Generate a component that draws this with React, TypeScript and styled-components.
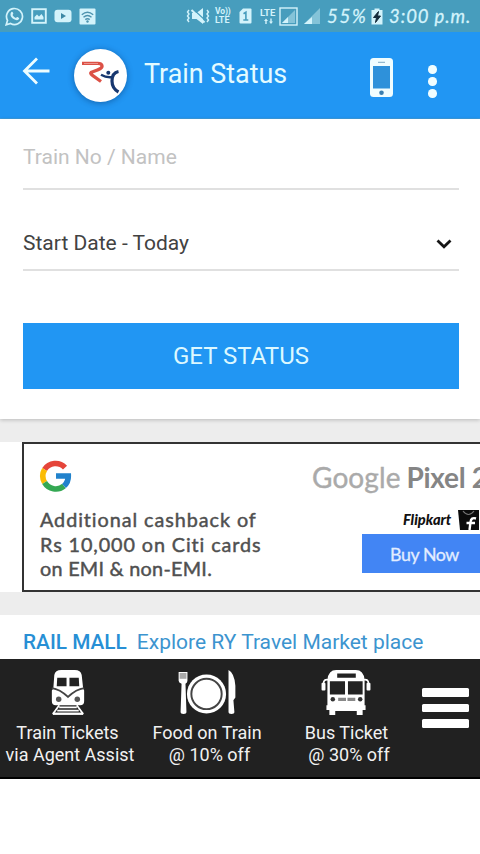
import React from 'react';
import styled, { createGlobalStyle } from 'styled-components';

const GlobalStyle = createGlobalStyle`
  * { box-sizing: border-box; }
  body { margin: 0; background: #fff; font-family: Roboto, sans-serif; }
`;

const Screen = styled.div`
  width: 480px;
  height: 854px;
  display: flex;
  flex-direction: column;
  overflow: hidden;
  background: #fff;
`;

const Label = styled.span<{ $size: number; $color: string; $spacing?: number; $weight?: number; $line?: number }>`
  display: block;
  white-space: pre;
  font-size: ${p => p.$size}px;
  line-height: ${p => p.$line ?? 24}px;
  color: ${p => p.$color};
  letter-spacing: ${p => p.$spacing ?? 0}px;
  font-weight: ${p => p.$weight ?? 400};
`;

const StatusBar = styled.header`
  height: 32px;
  flex: none;
  display: flex;
  align-items: center;
  padding-left: 5px;
  background: #479dbd;
  color: #d3f3fb;
`;

const Slot = styled.div<{ $width: number; $gap?: number }>`
  width: ${p => p.$width}px;
  margin-left: ${p => p.$gap ?? 0}px;
  flex: none;
  display: flex;
  flex-direction: column;
  svg { display: block; }
`;

const Clock = styled(Label)`
  font-family: Lato, sans-serif;
  font-style: italic;
  -webkit-text-stroke: 0.3px currentColor;
`;

const AppBar = styled.div`
  height: 87px;
  flex: none;
  display: flex;
  align-items: flex-start;
  padding-left: 22px;
  background: #2196f3;
  border-bottom: 1px solid #3c9ce0;
  svg { display: block; flex: none; }
`;

const BackIcon = styled.svg`margin-top: 25px;`;
const Logo = styled.div`
  width: 53px;
  height: 53px;
  margin: 17px 0 0 24px;
  border-radius: 50%;
  background: #fff;
  box-shadow: 0 1px 6px rgba(0, 40, 90, 0.45);
`;
const Title = styled(Label)`
  width: 225px;
  margin: 26px 0 0 17px;
`;
const PhoneIcon = styled.svg`margin-top: 26px;`;
const Dots = styled.div`
  display: flex;
  flex-direction: column;
  gap: 3.500px;
  margin: 33px 0 0 34px;
`;
const Dot = styled.i`
  width: 8.500px;
  height: 8.500px;
  border-radius: 50%;
  background: #f0fdff;
`;

const FormCard = styled.section`
  height: 300px;
  flex: none;
  padding: 0 21px 0 23px;
  background: #fff;
  box-shadow: 0 1px 4px rgba(0, 0, 0, 0.22);
  z-index: 1;
`;
const Field = styled.div<{ $height: number; $bottom: number }>`
  height: ${p => p.$height}px;
  display: flex;
  align-items: flex-end;
  justify-content: space-between;
  padding: 0 7px ${p => p.$bottom}px 0;
  border-bottom: 2px solid #e0e0e0;
`;
const Submit = styled.button`
  display: flex;
  width: 436px;
  height: 66px;
  margin-top: 52px;
  padding: 0;
  align-items: center;
  justify-content: center;
  border: 0;
  background: #2196f3;
  font-family: inherit;
`;

const Band = styled.div`
  height: 23px;
  flex: none;
  background: #ededed;
`;

const AdRow = styled.section`
  height: 150px;
  flex: none;
  padding-left: 22px;
  overflow: hidden;
`;
const Ad = styled.div`
  width: 520px;
  height: 150px;
  display: flex;
  border: 2px solid #333;
  font-family: Lato, sans-serif;
`;
const AdCopy = styled.div`
  width: 288px;
  padding: 15px 0 0 15px;
  svg { display: block; margin-bottom: 14px; }
`;
const AdLine = styled(Label)`
  margin-left: 1px;
  -webkit-text-stroke: 0.45px currentColor;
`;
const AdOffer = styled.div`
  flex: 1;
  padding-top: 17px;
`;
const Product = styled.div`display: flex; gap: 6px;`;
const ProductBrand = styled(Label)`
  -webkit-text-stroke: 0.4px currentColor;
`;
const Seller = styled.div`
  display: flex;
  align-items: center;
  height: 22px;
  margin: 16px 0 0 91px;
`;
const SellerName = styled(Label)`
  width: 55px;
  font-style: italic;
`;
const BuyButton = styled.div`
  height: 39px;
  margin: 3px 0 0 50px;
  padding: 8px 0 0 28px;
  background: #4285f4;
`;
const BuyText = styled(Label)`
  -webkit-text-stroke: 0.3px currentColor;
`;

const Mall = styled.section`
  height: 44px;
  flex: none;
  display: flex;
  gap: 10px;
  padding: 15px 0 0 23px;
`;

const BottomBar = styled.nav`
  height: 120px;
  flex: none;
  display: flex;
  background: #212121;
  border-bottom: 2px solid #000;
`;
const Tab = styled.div`
  width: 139px;
  flex: none;
  display: flex;
  flex-direction: column;
  align-items: center;
  padding-top: 11px;
  svg { display: block; height: 45px; margin: 0 4px 6px 0; }
`;
const TabLine = styled(Label)<{ $shift?: number }>`
  margin-left: ${p => p.$shift ?? 0}px;
`;
const Burger = styled.div`
  display: flex;
  flex-direction: column;
  gap: 7px;
  margin: 29px 0 0 5px;
`;
const Bar = styled.i`
  width: 47px;
  height: 8.6px;
  border-radius: 1.5px;
  background: #fff;
`;

const WhatsApp = () => (
  <svg width="19" height="19" viewBox="0 0 19 19" fill="none">
    <path d="M1.2 17.8 2.5 13.4A8 8 0 1 1 5.6 16.5Z" stroke="currentColor" strokeWidth="1.7" />
    <path d="M6.2 5.2c.7-.8 1.3-.6 1.7.3.7 1.4.3 1.5-.3 2.4.7 1.5 1.8 2.4 3.4 3 .9-1.1 1-1.2 2.3-.5 1.3.6 1 1 .5 1.8-1.2 1.5-3.4 1-5.2-.2C6.3 10.7 4.4 8 6.2 5.2Z" fill="currentColor" />
  </svg>
);
const Picture = () => (
  <svg width="16" height="16" viewBox="0 0 16 16" fill="none">
    <rect x="1.2" y="1.2" width="13.6" height="13.6" stroke="currentColor" strokeWidth="1.9" />
    <path d="M3.5 11.5V9l2.500-2.500 2 2L10.500 6l2 3v2.500Z" fill="currentColor" />
  </svg>
);
const Video = () => (
  <svg width="18" height="14" viewBox="0 0 18 14">
    <rect x=".5" y=".8" width="17" height="12.4" rx="3" fill="currentColor" />
    <path d="m7 4 5 3-5 3Z" fill="#3c88a5" />
  </svg>
);
const WifiBox = () => (
  <svg width="17" height="17" viewBox="0 0 17 17" fill="none">
    <rect x=".5" y=".5" width="16" height="16" rx="1" fill="currentColor" />
    <path d="M2.800 6.700q5.700-4.800 11.400 0M4.500 9.300q4-3.400 8 0M6.300 11.600q2.200-1.800 4.400 0" stroke="#4d93ae" strokeWidth="1.4" />
    <circle cx="8.5" cy="13.5" r="1.2" fill="#4d93ae" />
  </svg>
);
const Mute = () => (
  <svg width="24" height="18" viewBox="0 0 24 18" fill="none" stroke="currentColor">
    <path d="M6 6h4.500L17 1v16l-6.500-5H6Z" fill="currentColor" stroke="none" />
    <path d="m7 2 13 12" stroke="#479dbd" strokeWidth="1.2" />
    <path d="m5.500 3 13 12.500" strokeWidth="2" />
    <path d="m3 3-1.500 2L3 7 1.500 9 3 11l-1.500 2L3 15M21 3l1.500 2L21 7l1.500 2-1.500 2 1.500 2-1.500 2" strokeWidth="1.4" />
  </svg>
);
const Sim = () => (
  <svg width="13" height="16" viewBox="0 0 13 16" fill="none">
    <path d="M4 .5h7.500q1 0 1 1v13q0 1-1 1h-10q-1 0-1-1V4Z" fill="currentColor" />
    <path d="m4.500 5.700 2.400-1.500V12M4.300 12h5" stroke="#479dbd" strokeWidth="1.6" />
  </svg>
);
const Arrows = () => (
  <svg width="16" height="7" viewBox="0 0 16 7" fill="currentColor">
    <path d="M6 .5 8 3H6.700v3H5.300V3H4ZM11 6 9 3.500h1.300v-3h1.400v3H13Z" />
  </svg>
);
const SignalBox = () => (
  <svg width="19" height="19" viewBox="0 0 19 19" fill="none">
    <rect x="1" y="1" width="17" height="17" stroke="currentColor" strokeWidth="1.4" />
    <path d="M3 16 16 3v13Z" fill="#84c3d8" />
    <path d="M3 16l6-6v6Z" fill="currentColor" />
  </svg>
);
const Signal = () => (
  <svg width="16" height="16" viewBox="0 0 16 16">
    <path d="M0 16 16 0v16Z" fill="#84c3d8" />
    <path d="m0 16 8-7v7Z" fill="currentColor" />
  </svg>
);
const Battery = () => (
  <svg width="12" height="17" viewBox="0 0 12 17">
    <path d="M3.500 2V.5h5V2h3v14.500H.5V2Z" fill="currentColor" />
    <path d="M7.500 3.500 2.500 9.500h3l-1 5 5-6.500h-3Z" fill="#142b3b" stroke="#142b3b" />
  </svg>
);

const LogoMark = () => (
  <svg width="53" height="53" viewBox="0 0 53 53" fill="none">
    <path d="M8 14.300h16c4.500 0 5 3.500 2.500 5.200-2.500 1.500-5 2.300-8.500 3.500-2 .8-1.500 2 .5 3.300l8.500 6.200" stroke="#dc5146" strokeWidth="3.3" />
    <path d="M10 14.500h14" stroke="#f0a59f" strokeWidth=".8" />
    <path d="M27 25.800c3.500 2 7.500 3 12 2.200" stroke="#17376f" strokeWidth="2.4" />
    <path d="M44.500 22.500c-5 1-6.500 5-6.500 9.500 0 5 2 8.500 6.500 11" stroke="#17376f" strokeWidth="3.200" />
    <circle cx="34.3" cy="23.8" r="2" fill="#17376f" />
  </svg>
);

const GoogleG = () => (
  <svg width="33" height="34" viewBox="0 0 33 34" fill="none" strokeWidth="5.600">
    <path d="M26 8.600A13 13 0 0 0 5.600 10.500" stroke="#e5453a" />
    <path d="M5.600 10.500A13 13 0 0 0 5.600 23.500" stroke="#fbbc05" />
    <path d="M5.600 23.500A13 13 0 0 0 25 27" stroke="#34a853" />
    <path d="M25 27A13 13 0 0 0 29.300 17H17" stroke="#2182cc" />
  </svg>
);

const SellerBag = () => (
  <svg width="21" height="22" viewBox="0 0 21 22" fill="none">
    <path d="M0 1h21v20H2Z" fill="#0b0b0b" />
    <path d="M5 2q5.500 7 11 0" stroke="#777" strokeWidth="1.2" />
    <path d="M18 9.500q-5-1.500-5.500 3.500l-1 8M8.500 14H17" stroke="#fff" strokeWidth="2.4" />
  </svg>
);

const Train = () => (
  <svg width="34" height="46" viewBox="0 0 34 46">
    <path d="M3 5Q4 0 10 0h14q6 0 7 5l1.500 14L33.500 21v11q0 4-4 4h-25q-4 0-4-4V21L2 19Z" fill="#fff" />
    <path d="M6 8h9.500v8.500H5.500ZM18.500 8H28l.5 8.500h-10Z" fill="#222" />
    <path d="M.5 18.500q8 1 16.500 9 8.500-8 16.500-9" fill="none" stroke="#444" strokeWidth="2" />
    <circle cx="7.500" cy="29.800" r="2.800" fill="#555" /><circle cx="26.500" cy="29.800" r="2.800" fill="#555" />
    <path d="M8 36 1.500 45M26 36l6.500 9M8 38.300h18M6 41.600h22" stroke="#fff" strokeWidth="1.800" />
    <path d="M1.500 44.700h31" stroke="#fff" strokeWidth="2.400" />
  </svg>
);
const Meal = () => (
  <svg width="58" height="46" viewBox="0 0 58 46" fill="#fff">
    <path d="M0 2h9v9q0 2-2 3l1 29q0 2-3 2t-3-2l1-29q-3-1-3-3Z" />
    <path d="M1 3h7v6H1Z" fill="#aaa" />
    <circle cx="28.5" cy="24.5" r="20" /><circle cx="28.5" cy="24.5" r="15.5" fill="none" stroke="#444" strokeWidth="2" />
    <path d="M51 0q6 3 7 16v12l-2 3 1 12q0 2-3 2t-3-2Z" />
  </svg>
);
const Bus = () => (
  <svg width="50" height="46" viewBox="0 0 50 46">
    <path d="M6 10q1-10 9-10h20q8 0 9 10v26h1v5h-3v5h-6v-4H14v4H8v-5H5v-5h1Z" fill="#fff" />
    <path d="M7 10Q2 9 2 14M43 10q5-1 5 4" fill="none" stroke="#fff" strokeWidth="1.7" />
    <rect x="0" y="13" width="4" height="8" rx="1" fill="#fff" /><rect x="46" y="13" width="4" height="8" rx="1" fill="#fff" />
    <path d="M16 3.500h19V8H16ZM8.500 11.500H24V25H8.500ZM27 11.500h15V25H27Z" fill="#222" />
    <circle cx="11.500" cy="30" r="2.300" fill="#333" /><circle cx="39.500" cy="30" r="2.300" fill="#333" />
    <path d="M17 30h8M26.500 30h8" stroke="#888" strokeWidth="3.5" />
  </svg>
);

const adLines = [
  { text: 'Additional cashback of', spacing: 0.94 },
  { text: 'Rs 10,000 on Citi cards', spacing: 0.9 },
  { text: 'on EMI & non-EMI.', spacing: 0.27 },
];

const tabs = [
  { icon: <Train />, top: 'Train Tickets', bottom: 'via Agent Assist', topShift: -4, shift: 1 },
  { icon: <Meal />, top: 'Food on Train', bottom: '@ 10% off', topShift: -3, shift: 2 },
  { icon: <Bus />, top: 'Bus Ticket', bottom: '@ 30% off', topShift: -2, shift: 3 },
];

export default function App() {
  return (
    <>
      <GlobalStyle />
      <Screen>
        <StatusBar>
          <Slot $width={19}><WhatsApp /></Slot>
          <Slot $width={16} $gap={7}><Picture /></Slot>
          <Slot $width={18} $gap={7}><Video /></Slot>
          <Slot $width={17} $gap={7}><WifiBox /></Slot>
          <Slot $width={24} $gap={90}><Mute /></Slot>
          <Slot $width={17} $gap={5}>
            <Label $size={8.5} $line={9} $color="#d3f3fb" $weight={700} $spacing={-0.1}>Vo))</Label>
            <Label $size={9} $line={9} $color="#d3f3fb" $weight={700}>LTE</Label>
          </Slot>
          <Slot $width={13} $gap={7}><Sim /></Slot>
          <Slot $width={17} $gap={8}>
            <Label $size={9.5} $line={10} $color="#d3f3fb" $weight={700}>LTE</Label>
            <Arrows />
          </Slot>
          <Slot $width={19} $gap={2}><SignalBox /></Slot>
          <Slot $width={16} $gap={6}><Signal /></Slot>
          <Slot $width={44} $gap={7}><Clock $size={18.5} $color="#d3f3fb" $spacing={1.8}>55%</Clock></Slot>
          <Slot $width={12} $gap={0}><Battery /></Slot>
          <Slot $width={86} $gap={6}><Clock $size={18.5} $color="#d3f3fb" $spacing={0.9}>3:00 p.m.</Clock></Slot>
        </StatusBar>

        <AppBar>
          <BackIcon width="28" height="28" viewBox="0 0 28 28" fill="none" stroke="#edfdff" strokeWidth="2.8">
            <path d="M27.500 14H3M15 1.500 2.500 14 15 26.500" />
          </BackIcon>
          <Logo><LogoMark /></Logo>
          <Title $size={26.9} $line={32} $color="#e4fbff">Train Status</Title>
          <PhoneIcon width="25" height="40" viewBox="0 0 25 40">
            <rect x="1" y="0" width="23" height="39" rx="3.5" fill="#f0fdff" />
            <rect x="4" y="8" width="17" height="22.5" fill="#2e91da" />
            <path d="M9 4.300h7" stroke="#7fa9c4" strokeWidth="1" />
            <circle cx="12.5" cy="34.8" r="2.3" fill="#3b7fb0" />
          </PhoneIcon>
          <Dots><Dot /><Dot /><Dot /></Dots>
        </AppBar>

        <FormCard>
          <Field $height={71} $bottom={19}>
            <Label $size={21} $color="#c2c2c2">Train No / Name</Label>
          </Field>
          <Field $height={81} $bottom={14}>
            <Label $size={21} $color="#424242">Start Date - Today</Label>
            <svg width="16" height="20" viewBox="0 0 16 20" fill="none" stroke="#161616" strokeWidth="2.8">
              <path d="m1.500 5.500 6.500 6.200 6.500-6.200" />
            </svg>
          </Field>
          <Submit><Label $size={24} $color="#dcf8ff">GET STATUS</Label></Submit>
        </FormCard>
        <Band />

        <AdRow>
          <Ad>
            <AdCopy>
              <GoogleG />
              {adLines.map(l => (
                <AdLine key={l.text} $size={19.8} $line={24.5} $color="#505050" $spacing={l.spacing}>{l.text}</AdLine>
              ))}
            </AdCopy>
            <AdOffer>
              <Product>
                <ProductBrand $size={28} $line={32} $color="#aaa" $spacing={0.1}>Google</ProductBrand>
                <Label $size={28} $line={32} $color="#858585" $weight={700} $spacing={-0.3}>Pixel 2</Label>
              </Product>
              <Seller>
                <SellerName $size={14.6} $color="#111" $weight={900}>Flipkart</SellerName>
                <SellerBag />
              </Seller>
              <BuyButton><BuyText $size={17.8} $spacing={-0.4} $color="#e2edff">Buy Now</BuyText></BuyButton>
            </AdOffer>
          </Ad>
        </AdRow>
        <Band />

        <Mall>
          <Label $size={20.8} $color="#278fd5" $weight={500}>RAIL MALL</Label>
          <Label $size={21} $color="#3c94cf">Explore RY Travel Market place</Label>
        </Mall>

        <BottomBar>
          {tabs.map(t => (
            <Tab key={t.top}>
              {t.icon}
              <TabLine $size={18} $line={23} $color="#f1f1f1" $shift={t.topShift}>{t.top}</TabLine>
              <TabLine $size={18} $line={22.5} $color="#f1f1f1" $shift={t.shift}>{t.bottom}</TabLine>
            </Tab>
          ))}
          <Burger><Bar /><Bar /><Bar /></Burger>
        </BottomBar>
      </Screen>
    </>
  );
}
